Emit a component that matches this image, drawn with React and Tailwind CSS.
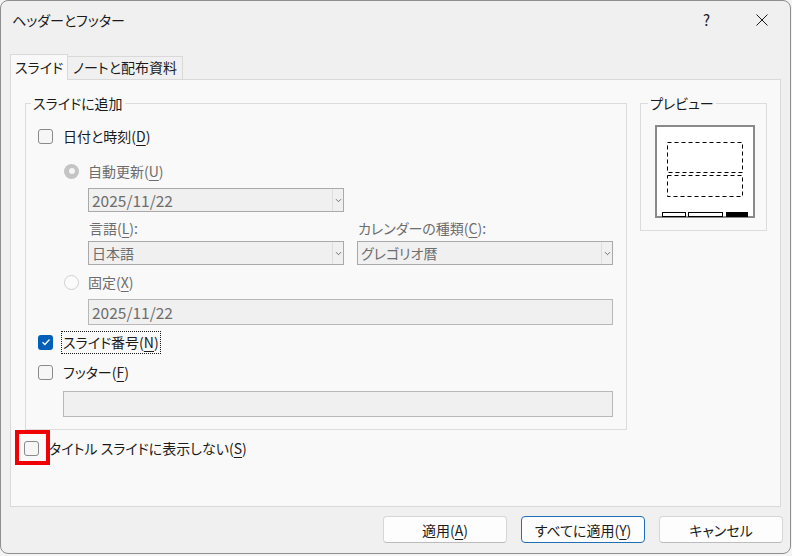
import React from 'react';

const U = ({ children }) => (
  <span className="underline decoration-1 underline-offset-[3px]">{children}</span>
);

function CheckBox({ checked }) {
  if (checked) {
    return (
      <span className="flex h-[15px] w-[15px] shrink-0 items-center justify-center rounded-[3px] bg-[#005fb8]">
        <svg width="10" height="8" viewBox="0 0 10 8">
          <path d="M1.5 4.2l2.4 2.3 4.6-5" fill="none" stroke="#fff" strokeWidth="1.3" />
        </svg>
      </span>
    );
  }
  return <span className="block h-[15px] w-[15px] shrink-0 rounded-[3px] border border-[#8a8a8a] bg-[#f6f6f6]" />;
}

function Radio({ checked }) {
  if (checked) {
    return (
      <span className="flex h-[15px] w-[15px] shrink-0 items-center justify-center rounded-full bg-[#c4c4c4]">
        <span className="h-[6px] w-[6px] rounded-full bg-[#f5f5f5]" />
      </span>
    );
  }
  return <span className="block h-[15px] w-[15px] shrink-0 rounded-full border border-[#d0d0d0] bg-[#fbfbfb]" />;
}

function Select({ value, latin }) {
  return (
    <div className="flex h-[24px] w-[256px] items-stretch border border-[#a9a9a9] bg-[#f0f0f0]">
      <div className={`flex flex-1 items-center pl-[3px] text-[#6d6d6d] ${latin ? 'text-[15.5px]' : ''}`}>{value}</div>
      <div className="flex w-[11px] items-center justify-center border-l border-[#dedede]">
        <svg width="7" height="5" viewBox="0 0 7 5">
          <path d="M1 1.2l2.5 2.5 2.5-2.5" fill="none" stroke="#707070" strokeWidth="1" />
        </svg>
      </div>
    </div>
  );
}

function Button({ children, primary }) {
  return (
    <button
      className={`flex h-[27px] w-[124px] items-center justify-center rounded-[4px] border bg-[#fdfdfd] ${
        primary ? 'border-[#1f6fb8]' : 'border-[#d6d6d6] border-b-[#bcbcbc]'
      }`}
    >
      {children}
    </button>
  );
}

export default function App() {
  return (
    <div className="h-[556px] w-[792px] bg-[#f4f4f4] font-['Noto_Sans_CJK_JP','Noto_Sans',sans-serif] text-[14px] leading-[20px] text-[#1b1b1b] [font-feature-settings:'palt']">
      <div className="flex h-[554px] w-[791px] flex-col rounded-[8px] border border-[#8e8e8e] bg-[#f0f0f0]">
        {/* Title bar */}
        <div className="flex h-[38px] shrink-0 items-center pl-[11px] pr-[22px]">
          <span>ヘッダーとフッター</span>
          <span className="ml-auto mr-[46px] text-[15px]">?</span>
          <svg width="12" height="12" viewBox="0 0 12 12">
            <path d="M0.5 0.5l11 11M11.5 0.5l-11 11" stroke="#1b1b1b" strokeWidth="1" />
          </svg>
        </div>

        {/* Tabs */}
        <div className="flex items-end pl-[9px] pt-[15px]">
          <div className="relative z-10 -mb-px h-[26px] border border-b-0 border-[#d9d9d9] bg-[#f9f9f9] px-[4px] pt-[2px]">
            スライド
          </div>
          <div className="h-[23px] border border-b-0 border-l-0 border-[#d9d9d9] bg-[#f0f0f0] px-[5px]">
            ノートと配布資料
          </div>
        </div>

        {/* Panel */}
        <div className="ml-[9px] flex h-[428px] w-[771px] flex-col border border-[#d9d9d9] bg-[#f9f9f9] pl-[14px] pt-[13px]">
          <div className="flex items-start gap-[13px]">
            {/* スライドに追加 */}
            <fieldset className="w-[602px] border border-[#dcdcdc]">
              <legend className="ml-[5px] px-[2px]">スライドに追加</legend>
              <div className="flex flex-col pb-[12px] pl-[12px]">
                <div className="mt-[11px] flex h-[24px] items-center">
                  <CheckBox />
                  <span className="ml-[10px]">日付と時刻(<U>D</U>)</span>
                </div>

                <div className="ml-[26px] mt-[11px] flex h-[24px] items-center text-[#6d6d6d]">
                  <Radio checked />
                  <span className="ml-[9px]">自動更新(<U>U</U>)</span>
                </div>

                <div className="ml-[50px] mt-[5px]">
                  <Select value="2025/11/22" latin />
                </div>

                <div className="ml-[50px] mt-[6px] grid h-[20px] grid-cols-[256px_256px] gap-x-[13px] text-[#6d6d6d]">
                  <span className="pl-[1px]">言語(<U>L</U>):</span>
                  <span className="pl-[1px]">カレンダーの種類(<U>C</U>):</span>
                </div>

                <div className="ml-[50px] mt-[3px] flex gap-[13px]">
                  <Select value="日本語" />
                  <Select value="グレゴリオ暦" />
                </div>

                <div className="ml-[26px] mt-[5px] flex h-[24px] items-center text-[#6d6d6d]">
                  <Radio />
                  <span className="ml-[9px]">固定(<U>X</U>)</span>
                </div>

                <div className="ml-[50px] mt-[5px] flex h-[26px] w-[525px] items-center border border-[#b8b8b8] bg-[#f0f0f0] pl-[3px] text-[15.5px] text-[#6d6d6d]">
                  2025/11/22
                </div>

                <div className="mt-[5px] flex h-[24px] items-center">
                  <CheckBox checked />
                  <span className="ml-[8px] border border-dotted border-[#1b1b1b] px-[1px] leading-[21px]">
                    スライド番号(<U>N</U>)
                  </span>
                </div>

                <div className="mt-[6px] flex h-[24px] items-center">
                  <CheckBox />
                  <span className="ml-[10px]">フッター(<U>F</U>)</span>
                </div>

                <div className="ml-[25px] mt-[7px] h-[26px] w-[550px] border border-[#b8b8b8] bg-[#f0f0f0]" />
              </div>
            </fieldset>

            {/* プレビュー */}
            <fieldset className="w-[127px] border border-[#dcdcdc]">
              <legend className="ml-[7px] px-[2px]">プレビュー</legend>
              <div className="pb-[12px] pl-[14px] pt-[12px]">
                <svg width="100" height="93" viewBox="0 0 100 93">
                  <rect x="1" y="1" width="98" height="91" fill="#fff" stroke="#8a8a8a" strokeWidth="2" />
                  <rect x="12.5" y="17.5" width="75" height="30" fill="none" stroke="#000" strokeDasharray="4 3" />
                  <rect x="12.5" y="50.5" width="75" height="21" fill="none" stroke="#000" strokeDasharray="4 3" />
                  <rect x="7.5" y="87.5" width="23" height="4" fill="#fff" stroke="#000" />
                  <rect x="33.5" y="87.5" width="34" height="4" fill="#fff" stroke="#000" />
                  <rect x="71" y="87" width="22" height="5" fill="#000" />
                </svg>
              </div>
            </fieldset>
          </div>

          <div className="-ml-px mt-[6px] flex h-[24px] items-center">
            <span className="relative">
              <CheckBox />
              <span className="absolute left-[-9px] top-[-11px] h-[35px] w-[35px] border-[4px] border-[#f00000]" />
            </span>
            <span className="ml-[10px]">タイトル スライドに表示しない(<U>S</U>)</span>
          </div>
        </div>

        {/* Buttons */}
        <div className="mt-[9px] flex justify-end gap-[14px] pr-[7px]">
          <Button>適用(<U>A</U>)</Button>
          <Button primary>すべてに適用(<U>Y</U>)</Button>
          <Button>キャンセル</Button>
        </div>
      </div>
    </div>
  );
}
